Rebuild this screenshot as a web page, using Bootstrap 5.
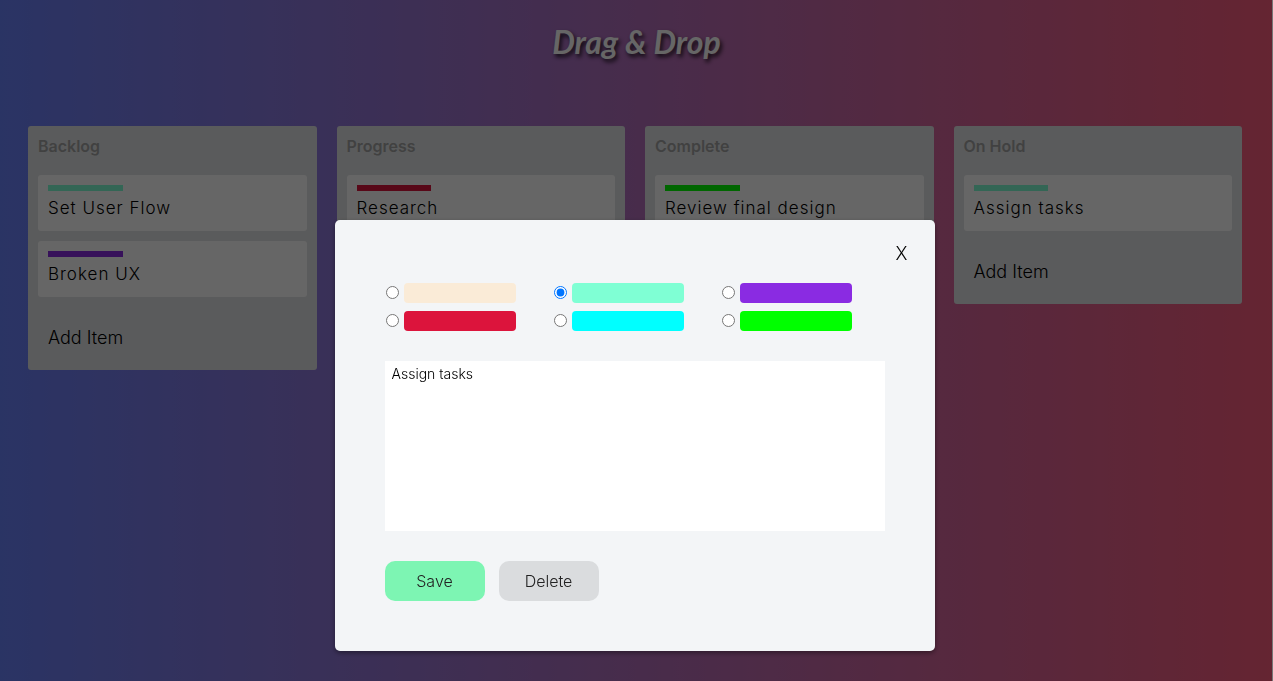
<!DOCTYPE html>
<html lang="en">
<head>
<meta charset="utf-8">
<meta name="viewport" content="width=device-width, initial-scale=1">
<title>Drag &amp; Drop</title>
<link rel="stylesheet" href="https://cdn.jsdelivr.net/npm/bootstrap@5.3.0/dist/css/bootstrap.min.css">
<style>
body {
  font-family: "Inter", "Open Sans", sans-serif;
  font-size: 16px;
  font-weight: 300;
  color: #000;
  background: linear-gradient(to right, #6a82fb, #fc5c7d);
}
.page-title {
  font-family: "Lato", cursive, sans-serif;
  font-size: 32px;
  line-height: 48px;
  font-weight: 700;
  font-style: italic;
  color: #fff;
  text-shadow: 2px 3px 4px rgba(0, 0, 0, .8);
  margin: 18px 0 60px;
}
.board { padding: 0 31px 0 28px; gap: 20px; }
.lane { flex: 1 1 0; min-width: 0; background: #e2e4e6; border-radius: 3px; padding: 10px; }
.lane-title { font-size: 16px; line-height: 20px; font-weight: 600; color: #a4a4a4; margin: 0 0 19px; }
.task { background: #fff; border-radius: 3px; padding: 10px 10px 6px; margin-bottom: 10px; font-size: 17px; letter-spacing: 1px; line-height: 34px; }
.task-mark { width: 30%; height: 6px; }
.add-item { border: 0; background: none; padding: 10px; font-size: 18px; line-height: 24px; margin-top: 19px; font-weight: 300; }
.tone-antique { background: #faebd7; }
.tone-aqua { background: #7fffd4; }
.tone-violet { background: #8a2be2; }
.tone-crimson { background: #dc143c; }
.tone-cyan { background: #00ffff; }
.tone-lime { background: #00ff00; }
.veil { background: rgba(0, 0, 0, .6); padding-right: 3px; border-right: 1px solid #777; }
.editor { max-width: 600px; margin: 220px auto 30px; }
.editor .modal-content { background: #f3f5f7; border: 0; border-radius: 5px; padding: 22px 50px 50px; box-shadow: 0 2px 5px rgba(0, 0, 0, .4); }
.close-x { border: 0; background: none; font-size: 18px; line-height: 24px; padding: 0 5px; margin-right: -28px; font-weight: 300; }
.palette { display: grid; grid-template-columns: repeat(auto-fill, 131px); gap: 8px 37px; margin: 17px 0 30px; }
.palette input { width: 13px; height: 13px; margin: 0 5px 2px 1px; }
.swatch { width: 112px; height: 20px; border-radius: 4px; }
.note { height: 170px; border: 0; padding: 4px 7px; font-size: 14px; line-height: 18px; resize: none; outline: 0; font-weight: 300; color: #000; }
.actions { gap: 14px; margin-top: 30px; }
.act { width: 100px; height: 40px; border: 0; border-radius: 10px; font-size: 16px; font-weight: 300; color: #222; }
.act-save { background: #7df5b3; }
.act-delete { background: #dadcde; }
</style>
</head>
<body class="min-vh-100">
<header><h1 class="page-title text-center">Drag &amp; Drop</h1></header>
<main class="board d-flex align-items-start">
  <section class="lane">
    <h2 class="lane-title">Backlog</h2>
    <article class="task"><div class="task-mark tone-aqua"></div>Set User Flow</article>
    <article class="task"><div class="task-mark tone-violet"></div>Broken UX</article>
    <button type="button" class="add-item d-block">Add Item</button>
  </section>
  <section class="lane">
    <h2 class="lane-title">Progress</h2>
    <article class="task"><div class="task-mark tone-crimson"></div>Research</article>
  </section>
  <section class="lane">
    <h2 class="lane-title">Complete</h2>
    <article class="task"><div class="task-mark tone-lime"></div>Review final design</article>
  </section>
  <section class="lane">
    <h2 class="lane-title">On Hold</h2>
    <article class="task"><div class="task-mark tone-aqua"></div>Assign tasks</article>
    <button type="button" class="add-item d-block">Add Item</button>
  </section>
</main>

<div class="modal veil d-block" role="dialog" aria-modal="true" aria-label="Edit item">
  <div class="modal-dialog editor">
    <form class="modal-content">
      <button type="button" class="close-x align-self-end">X</button>
      <div class="palette">
        <label class="d-flex align-items-center"><input type="radio" name="tone" aria-label="Antique white"><span class="swatch tone-antique"></span></label>
        <label class="d-flex align-items-center"><input type="radio" name="tone" aria-label="Aquamarine" checked><span class="swatch tone-aqua"></span></label>
        <label class="d-flex align-items-center"><input type="radio" name="tone" aria-label="Violet"><span class="swatch tone-violet"></span></label>
        <label class="d-flex align-items-center"><input type="radio" name="tone" aria-label="Crimson"><span class="swatch tone-crimson"></span></label>
        <label class="d-flex align-items-center"><input type="radio" name="tone" aria-label="Cyan"><span class="swatch tone-cyan"></span></label>
        <label class="d-flex align-items-center"><input type="radio" name="tone" aria-label="Lime"><span class="swatch tone-lime"></span></label>
      </div>
      <textarea class="note w-100" aria-label="Item text">Assign tasks</textarea>
      <div class="actions d-flex">
        <button type="button" class="act act-save">Save</button>
        <button type="button" class="act act-delete">Delete</button>
      </div>
    </form>
  </div>
</div>
<script src="https://cdn.jsdelivr.net/npm/bootstrap@5.3.0/dist/js/bootstrap.bundle.min.js"></script>
</body>
</html>
